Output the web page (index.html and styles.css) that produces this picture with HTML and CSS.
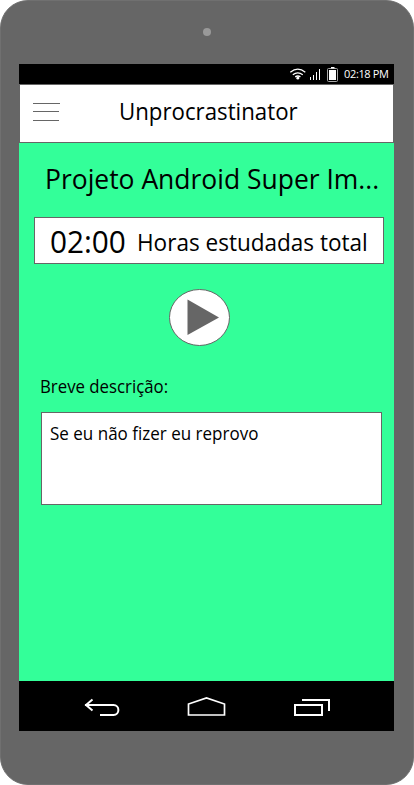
FILE: index.html
```html
<!DOCTYPE html>
<html lang="pt">
<head>
<meta charset="utf-8">
<title>Unprocrastinator</title>
<link rel="stylesheet" href="styles.css">
</head>
<body>
<div class="device">
  <div class="bezel"><span class="camera"></span></div>
  <div class="screen">
    <div class="status">
      <svg class="status-icons" width="50" height="20" viewBox="288 64 50 20" fill="none" stroke="#fff">
        <path d="M290.3 72.2Q297.8 66.2 305.3 72.2M292.8 74.700Q297.8 70.9 302.8 74.700M295.2 76.9Q297.8 75.1 300.4 76.9" stroke-width="1.300"/>
        <circle cx="297.8" cy="78.2" r="1.4" fill="#fff" stroke="none"/>
        <path d="M310.5 77V80M313.5 75V80M316.5 72V80M319.5 69V80"/>
        <rect x="327.5" y="68.500" width="10" height="13" rx="1" stroke="#aaa"/>
        <path d="M329 70h7v10h-7zM331 67h3.500v1.500h-3.500z" fill="#fff" stroke="none"/>
      </svg>
      <span class="time">02:18 PM</span>
    </div>
    <header class="appbar">
      <svg class="menu" width="28" height="20" viewBox="0 0 28 20" stroke="#666"><path d="M0 1.500H27M0 9.500H26M0 18.500H26"/></svg>
      <h1 class="app-title">Unprocrastinator</h1>
    </header>
    <main class="content">
      <h2 class="project">Projeto Android Super Im...</h2>
      <div class="hours"><span class="clock">02:00</span><span class="hours-label">Horas estudadas total</span></div>
      <svg class="play" width="62" height="58" viewBox="0 0 62 58"><ellipse cx="30.500" cy="28.500" rx="30" ry="28" fill="#fff" stroke="#666"/><path d="M18.500 10.500L50 28.500L18.500 46Z" fill="#666"/></svg>
      <p class="caption">Breve descrição:</p>
      <div class="description"><p class="description-text">Se eu não fizer eu reprovo</p></div>
    </main>
    <nav class="navbar">
      <svg width="375" height="50" viewBox="19 681 375 50" fill="none" stroke="#fff" stroke-width="2">
        <path d="M85 705H113.500C120 705 120 715 113.500 715H100M92.500 699.500L86 705L92.500 710.500"/>
        <path d="M188.500 715V704L206.500 698L224.500 704V715Z" stroke-width="1.700"/>
        <path d="M295 705H322V715H295ZM302 700H329V711"/>
      </svg>
    </nav>
  </div>
</div>
</body>
</html>
```

FILE: styles.css
```css
* { box-sizing: border-box; margin: 0; }
body { background: #fff; font-family: "Open Sans", "Noto Sans", sans-serif; color: #000; }
svg { display: block; flex: none; }
h1, h2 { font-weight: 400; }
.device { width: 414px; height: 785px; border-radius: 28px; background: #666; border: 1px solid #707070; padding: 0 18px; overflow: hidden; }
.bezel { height: 63px; display: flex; justify-content: center; padding-top: 27px; }
.camera { width: 8px; height: 8px; border-radius: 50%; background: #999; }
.screen { width: 375px; height: 667px; display: flex; flex-direction: column; white-space: nowrap; }
.status { height: 20px; background: #000; color: #fff; display: flex; padding-left: 269px; }
.time { margin-left: 6px; font-size: 11px; line-height: 19px; letter-spacing: -0.35px; }
.app-title, .project, .clock, .hours-label, .caption, .description-text { transform-origin: 0 50%; }
.appbar { height: 59px; background: #fff; border: 1px solid #666; display: flex; padding-left: 13px; }
.menu { margin-top: 17px; }
.app-title { font-size: 24px; line-height: 51px; margin-left: 58px; transform: scaleX(0.927); }
.content { flex: 1; background: #3f9; }
.project { font-size: 27.5px; line-height: 42px; height: 40px; margin: 15px 0 0 26px; transform: scaleX(0.962); }
.hours { width: 350px; height: 47px; margin: 19px 0 0 15px; background: #fff; border: 1px solid #666; display: flex; line-height: 47px; padding-left: 15px; }
.clock { font-size: 31px; width: 87px; transform: scaleX(0.96); }
.hours-label { font-size: 24px; line-height: 48px; transform: scaleX(0.939); }
.play { margin: 25px 0 0 150px; }
.caption { font-size: 17.5px; line-height: 24px; margin: 27px 0 0 20.5px; transform: scaleX(0.96); }
.description { width: 341px; height: 93px; margin: 14px 0 0 22px; background: #fff; border: 1px solid #666; padding: 8px; }
.description-text { font-size: 17.5px; line-height: 24px; transform: scaleX(0.972); }
.navbar { height: 50px; background: #000; }
```
